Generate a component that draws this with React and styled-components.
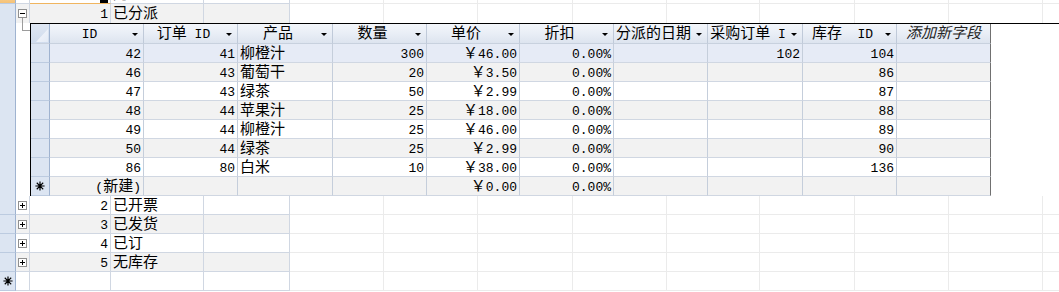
import React from "react";
import styled, { createGlobalStyle } from "styled-components";

const C = {
  sel: "#dce5f2",
  selLine: "#bccbe0",
  selEdge: "#9fb3d0",
  grid: "#d0d7e2",
  subV: "#c5cedb",
  faint: "#ebebeb",
  alt: "#f2f2f2",
  current: "#e6ebf6",
  tree: "#9c9c9c",
};

const GlobalStyle = createGlobalStyle`
  html, body { margin: 0; padding: 0; background: #ffffff; }
  body { font-family: "Liberation Mono", "Noto Sans CJK SC", monospace; }
`;

const Sheet = styled.div`
  width: 1059px;
  height: 292px;
  overflow: hidden;
  display: flex;
  flex-direction: column;
  background: #fff;
  color: #000;
  font-family: "Liberation Mono", monospace;
  font-size: 13px;
  line-height: 18px;
`;

const Latin = styled.span`
  font-family: "Liberation Mono", monospace;
  font-size: 13px;
`;

const Han = styled.span`
  font-family: "Noto Sans CJK SC", sans-serif;
  font-size: 15px;
  line-height: 0;
`;

const Hilite = styled.span`
  background: #000;
  color: #fff;
`;

function Txt({ value }) {
  if (value == null || value === "") return null;
  return String(value)
    .split(/([\x20-\x7e]+)/)
    .filter(Boolean)
    .map((part, i) =>
      /^[\x20-\x7e]+$/.test(part) ? (
        <Latin key={i}>{part}</Latin>
      ) : (
        <Han key={i}>{part}</Han>
      )
    );
}

/* ---------- parent datasheet ---------- */

const Row = styled.div`
  display: flex;
  flex: none;
  height: 19px;
  margin-top: ${(p) => (p.$cut ? "-15px" : "0")};
  background: ${(p) => (p.$alt ? C.alt : "#fff")};
`;

const Selector = styled.div`
  flex: none;
  width: 16px;
  height: 100%;
  box-sizing: border-box;
  display: flex;
  align-items: center;
  justify-content: center;
  background: ${(p) =>
    p.$current ? "linear-gradient(#fde4b6, #f5c278)" : C.sel};
  border-right: 1px solid ${C.selEdge};
  border-bottom: ${(p) => (p.$open ? "none" : `1px solid ${C.selLine}`)};
`;

const Expander = styled.div`
  flex: none;
  width: 14px;
  height: 100%;
  box-sizing: border-box;
  display: flex;
  flex-direction: column;
  justify-content: ${(p) => (p.$open ? "flex-start" : "center")};
  padding: ${(p) => (p.$open ? "5px 0 0 2px" : "0 0 0 2px")};
  border-right: 1px solid ${C.grid};
  border-bottom: ${(p) => (p.$open ? "none" : `1px solid ${C.grid}`)};
`;

const Stem = styled.div`
  flex: 1;
  width: 0;
  margin-left: 4px;
  border-left: 1px solid ${C.tree};
`;

const Cell = styled.div`
  flex: none;
  width: ${(p) => p.$w}px;
  height: 100%;
  box-sizing: border-box;
  padding: 2px 2px 0;
  text-align: ${(p) => p.$align || "left"};
  white-space: pre;
  border-right: 1px solid ${C.grid};
  border-bottom: ${(p) =>
    p.$open ? "none" : `1px solid ${p.$mark ? "#f0b55f" : C.grid}`};
`;

const Filler = styled.div`
  flex: none;
  width: ${(p) => p.$w}px;
  height: 100%;
  box-sizing: border-box;
  background: #fff;
  border-right: 1px solid ${C.faint};
  border-bottom: ${(p) => (p.$open ? "none" : `1px solid ${C.faint}`)};
`;

const fillerWidths = [94, 94, 95, 94, 93, 95, 94, 94, 94];

function TreeBox({ plus }) {
  return (
    <svg width="9" height="9" viewBox="0 0 9 9" style={{ flex: "none" }}>
      <rect x="0.5" y="0.5" width="8" height="8" fill="#fff" stroke="#8f8f8f" />
      <path d="M2 4.5h5" stroke="#000" />
      {plus && <path d="M4.5 2v5" stroke="#000" />}
    </svg>
  );
}

function NewMark() {
  return (
    <svg width="10" height="10" viewBox="0 0 10 10">
      <g stroke="#000" strokeWidth="1.2" strokeLinecap="square">
        <path d="M5 1v8M1 5h8M2.2 2.2l5.6 5.6M7.8 2.2l-5.6 5.6" />
      </g>
    </svg>
  );
}

function ParentRow({ id, name, alt, open, tree, current, isNew, cut }) {
  return (
    <Row $alt={alt} $cut={cut}>
      <Selector $current={current} $open={open}>
        {isNew && <NewMark />}
      </Selector>
      <Expander $open={open}>
        {tree && <TreeBox plus={tree === "plus"} />}
        {open && <Stem />}
      </Expander>
      <Cell $w={81} $align="right" $open={open} $mark={cut}>
        {typeof id === "string" ? <Txt value={id} /> : id}
      </Cell>
      <Cell $w={93} $open={open}>
        <Txt value={name} />
      </Cell>
      <Cell $w={86} $open={open} />
      {fillerWidths.map((w, i) => (
        <Filler key={i} $w={w} $open={open} />
      ))}
    </Row>
  );
}

/* ---------- sub datasheet ---------- */

const SubRegion = styled.div`
  display: flex;
  flex: none;
  height: 173px;
`;

const SelStrip = styled.div`
  flex: none;
  width: 16px;
  box-sizing: border-box;
  background: ${C.sel};
  border-right: 1px solid ${C.selEdge};
`;

const ExpStrip = styled.div`
  flex: none;
  width: 14px;
`;

const Connector = styled.div`
  width: 8px;
  height: 8px;
  margin-left: 6px;
  box-sizing: border-box;
  border-left: 1px solid ${C.tree};
  border-bottom: 1px solid ${C.tree};
`;

const SubFrame = styled.div`
  flex: 1;
  display: flex;
  align-items: flex-start;
  border-top: 1px solid #000;
`;

const SubTable = styled.div`
  flex: none;
  display: flex;
  flex-direction: column;
  border-left: 1px solid #000;
`;

const HeadRow = styled.div`
  display: flex;
  height: 20px;
`;

const HeadCell = styled.div`
  flex: none;
  display: flex;
  width: ${(p) => p.$w}px;
  height: 100%;
  box-sizing: border-box;
  background: linear-gradient(#f3f6fb 0%, #e9eef6 50%, #dde4ef 100%);
  border-right: 1px solid ${(p) => (p.$last ? "#707070" : "#c0cad9")};
  border-bottom: 1px solid #c8d1de;
`;

const Corner = styled(HeadCell)`
  align-items: flex-end;
  justify-content: flex-end;
  padding: 0 1px 1px 0;
  background: linear-gradient(#dfe7f3, #cfdbec);
  border-right: 1px solid ${C.selEdge};
`;

const HeadLabel = styled.div`
  flex: 1;
  min-width: 0;
  padding-top: 2px;
  text-align: center;
  white-space: pre;
  font-style: ${(p) => (p.$italic ? "italic" : "normal")};
  color: ${(p) => (p.$italic ? "#222" : "#000")};
`;

const Arrow = styled.span`
  flex: none;
  align-self: center;
  width: 0;
  height: 0;
  margin: 2px 5px 0 3px;
  border-left: 3px solid transparent;
  border-right: 3px solid transparent;
  border-top: 3px solid #000;
`;

const SubRow = styled.div`
  display: flex;
  height: 19px;
  background: ${(p) => (p.$current ? C.current : p.$alt ? C.alt : "#fff")};
`;

const SubSel = styled.div`
  flex: none;
  width: 19px;
  height: 100%;
  box-sizing: border-box;
  display: flex;
  align-items: center;
  justify-content: center;
  background: ${C.sel};
  border-right: 1px solid ${C.selEdge};
  border-bottom: 1px solid ${C.selLine};
`;

const SubCell = styled.div`
  flex: none;
  width: ${(p) => p.$w}px;
  height: 100%;
  box-sizing: border-box;
  padding: 2px 2px 0;
  text-align: ${(p) => p.$align};
  white-space: pre;
  border-right: 1px solid ${(p) => (p.$last ? "#707070" : C.subV)};
  border-bottom: 1px solid ${C.grid};
`;

const subCols = [
  { label: "ID", w: 94, align: "right" },
  { label: "订单 ID", w: 94, align: "right" },
  { label: "产品", w: 95, align: "left" },
  { label: "数量", w: 94, align: "right" },
  { label: "单价", w: 93, align: "right" },
  { label: "折扣", w: 94, align: "right" },
  { label: "分派的日期", w: 94, align: "right" },
  { label: "采购订单 I", w: 95, align: "right" },
  { label: "库存  ID", w: 94, align: "right" },
];

const details = [
  ["42", "41", "柳橙汁", "300", "￥46.00", "0.00%", "", "102", "104"],
  ["46", "43", "葡萄干", "20", "￥3.50", "0.00%", "", "", "86"],
  ["47", "43", "绿茶", "50", "￥2.99", "0.00%", "", "", "87"],
  ["48", "44", "苹果汁", "25", "￥18.00", "0.00%", "", "", "88"],
  ["49", "44", "柳橙汁", "25", "￥46.00", "0.00%", "", "", "89"],
  ["50", "44", "绿茶", "25", "￥2.99", "0.00%", "", "", "90"],
  ["86", "80", "白米", "10", "￥38.00", "0.00%", "", "", "136"],
];

const newDetail = ["(新建)", "", "", "", "￥0.00", "0.00%", "", "", ""];

function CornerMark() {
  return (
    <svg width="12" height="13" viewBox="0 0 12 13">
      <defs>
        <linearGradient id="cornerFill" x1="0" y1="0" x2="1" y2="1">
          <stop offset="0" stopColor="#f7f9fd" />
          <stop offset="1" stopColor="#e3eaf5" />
        </linearGradient>
      </defs>
      <polygon points="12,0 12,13 0,13" fill="url(#cornerFill)" />
    </svg>
  );
}

function DetailRow({ values, current, alt, isNew }) {
  return (
    <SubRow $current={current} $alt={alt}>
      <SubSel>{isNew && <NewMark />}</SubSel>
      {subCols.map((c, i) => (
        <SubCell key={i} $w={c.w} $align={c.align}>
          <Txt value={values[i]} />
        </SubCell>
      ))}
      <SubCell $w={94} $align="left" $last />
    </SubRow>
  );
}

function SubSheet() {
  return (
    <SubTable>
      <HeadRow>
        <Corner $w={19}>
          <CornerMark />
        </Corner>
        {subCols.map((c, i) => (
          <HeadCell key={i} $w={c.w}>
            <HeadLabel>
              <Txt value={c.label} />
            </HeadLabel>
            <Arrow />
          </HeadCell>
        ))}
        <HeadCell $w={94} $last>
          <HeadLabel $italic>
            <Txt value="添加新字段" />
          </HeadLabel>
        </HeadCell>
      </HeadRow>
      {details.map((d, i) => (
        <DetailRow key={i} values={d} current={i === 0} alt={i % 2 === 1} />
      ))}
      <DetailRow values={newDetail} alt isNew />
    </SubTable>
  );
}

const statuses = [
  { id: "2", name: "已开票" },
  { id: "3", name: "已发货" },
  { id: "4", name: "已订" },
  { id: "5", name: "无库存" },
];

export default function App() {
  return (
    <>
      <GlobalStyle />
      <Sheet>
        <ParentRow cut current id={<Hilite><Latin>0</Latin></Hilite>} name="无" />
        <ParentRow id="1" name="已分派" alt open tree="minus" />
        <SubRegion>
          <SelStrip />
          <ExpStrip>
            <Connector />
          </ExpStrip>
          <SubFrame>
            <SubSheet />
          </SubFrame>
        </SubRegion>
        {statuses.map((s, i) => (
          <ParentRow key={s.id} id={s.id} name={s.name} alt={i % 2 === 1} tree="plus" />
        ))}
        <ParentRow id="" name="" isNew />
      </Sheet>
    </>
  );
}
